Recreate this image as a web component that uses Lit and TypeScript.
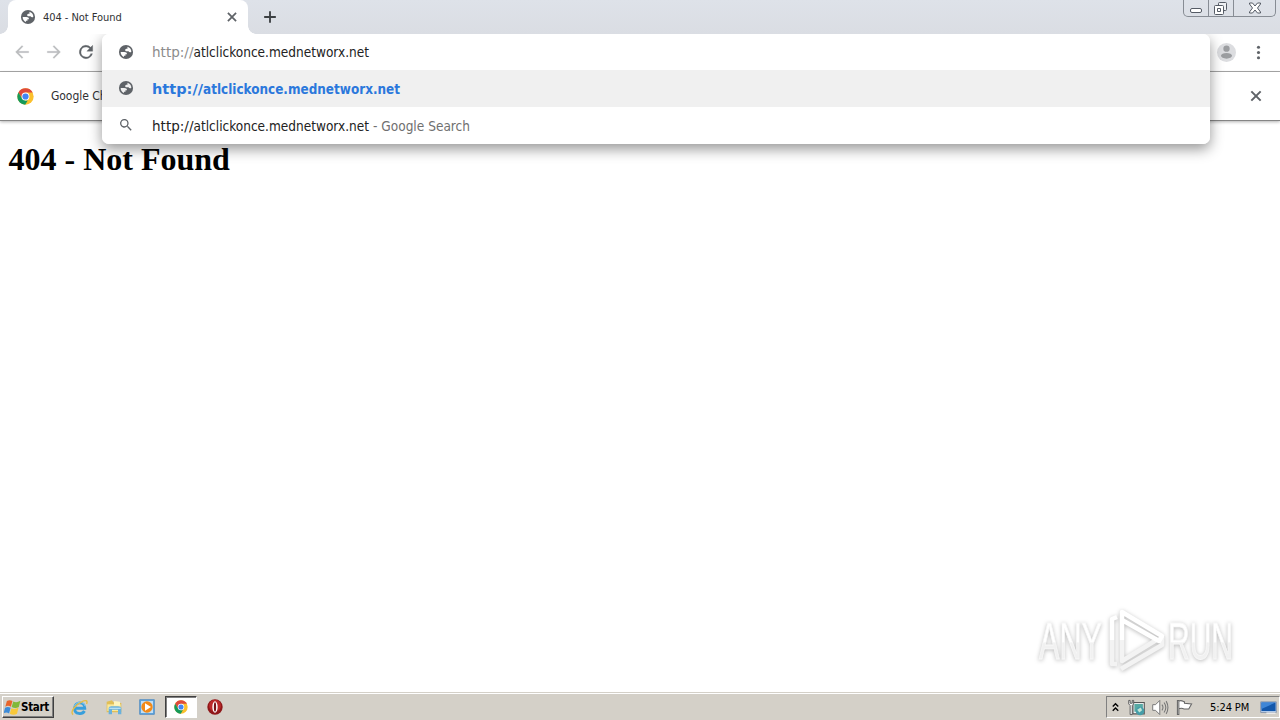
import { LitElement, html, svg, css } from "lit";
import { property, customElement } from "lit/decorators.js";

const icons: Record<string, any> = {
    globe: svg`<circle cx="12" cy="12" r="10.600" fill="#5f6368"/><path fill="var(--hole, #fff)" d="M4 12h5.500c2.600 0 4 1 4 3.200h-2.300v2.300H9v2C5.800 18.300 4 15.500 4 12zM14.200 4.300c3.300.9 5.800 4.100 5.800 7.200-1.200 1.400-3.200 1.200-4.200-.7h-3.500c-2 0-2-3.800 0-3.800h1.900z"/>`,
    close: svg`<path stroke="#5f6368" stroke-width="3" fill="none" d="M5 5l14 14M19 5L5 19"/>`,
    plus: svg`<path stroke="#3c4043" stroke-width="3.2" fill="none" d="M12 2v20M2 12h20"/>`,
    back: svg`<path fill="#babcbe" stroke="#babcbe" stroke-width=".3" d="M21 11H7.200l6.200-6.200L12 3.300 3.300 12l8.700 8.700 1.400-1.500L7.200 13H21z"/>`,
    forward: svg`<path fill="#babcbe" stroke="#babcbe" stroke-width=".3" d="M12 3.300l-1.400 1.500 6.200 6.200H3v2h13.800l-6.200 6.200 1.400 1.500 8.700-8.700z"/>`,
    reload: svg`<path fill="#5f6368" stroke="#5f6368" stroke-width=".4" d="M17.65 6.35A8 8 0 1 0 19.73 14h-2.08A6 6 0 1 1 12 6c1.66 0 3.14.69 4.22 1.78L13 11h7V4z"/>`,
    search: svg`<path fill="#5f6368" d="M15.5 14h-.79l-.28-.27A6.5 6.5 0 1 0 13.73 14.43l.27.28v.79l5 5 1.5-1.5zm-6 0a4.5 4.5 0 1 1 0-9 4.5 4.5 0 0 1 0 9z"/>`,
    user: svg`<circle cx="12" cy="12" r="12" fill="#dcdde0"/><circle cx="12" cy="7.2" r="4" fill="#9b9da0"/><ellipse cx="12" cy="16.2" rx="7" ry="3.6" fill="#9b9da0"/>`,
    dots: svg`<g fill="#5f6368"><circle cx="12" cy="4.5" r="2.2"/><circle cx="12" cy="12" r="2.2"/><circle cx="12" cy="19.5" r="2.2"/></g>`,
    chrome: svg`<circle cx="12" cy="12" r="11.5" fill="#fbc02d"/><path fill="#df4a3c" d="M2 6.3A11.5 11.5 0 0 1 22.2 6.5H12L7.2 14.8z"/><path fill="#159a5a" d="M2 6.3l5.2 8.5 4.8 2.7h3.2L11.5 23.5A11.5 11.5 0 0 1 2 6.3z"/><circle cx="12" cy="12" r="5.6" fill="#fff"/><circle cx="12" cy="12" r="4.4" fill="#4285f4"/>`,
    flag: svg`<g transform="translate(-1.5 -1.5) scale(1.12)"><path fill="#e8642a" d="M5 4c3-2 5-1 7 0l-2 7c-2-1-4-2-7 0z"/><path fill="#80b83a" d="M13 4.500c3 1.500 6 1 9-1l-2 8c-3 1.800-6 1.500-9 0z"/><path fill="#3c8bd8" d="M2.700 12.500c3-2 5-1 7 0l-2 7c-2-1-4-2-7 0z"/><path fill="#f8c83a" d="M10.700 13c3 1.500 6 1 9-1l-2 8c-3 1.800-6 1.500-9 0z"/></g>`,
    ie: svg`<path fill="none" stroke="#389fdc" stroke-width="4" d="M5 13h14.500c0-10-14.500-10-14.500 0 0 9 11 9.500 14 4"/><path fill="none" stroke="#95d5f5" stroke-width="1.200" d="M5 10c2-7 13-7 15 0"/><path fill="none" stroke="#e5bd48" stroke-width="2" d="M3 22c-5-3 3-14 12-18 6-3 9-2 7 3"/>`,
    folder: svg`<path fill="#e1bf56" d="M1 4l8-2 2 3 12 1v14H1z"/><path fill="#fbe99c" d="M2 8h20v10H2z"/><path fill="#fff5bd" d="M12 3l9 1v6h-9z"/><path fill="#69b1dd" d="M4 14c0-2 2-3 4-3h10c3 0 5 1 5 3v9h-5v-7H9v7H4z"/><path fill="#b8e1f3" d="M5 13h17v2H5z"/>`,
    player: svg`<path fill="#62a8df" stroke="#397dbc" d="M1 1h22v22H1z"/><path fill="#c1def5" d="M3 3h18v18H3z"/><circle cx="12" cy="12" r="8.500" fill="#f28a18"/><path fill="#fff" d="M9 6.500v11l9-5.500z"/>`,
    opera: svg`<circle cx="12" cy="12" r="11.500" fill="#8f1719"/><circle cx="12" cy="10" r="9" fill="#bc292a"/><ellipse cx="12" cy="12" rx="4" ry="8.500" fill="#fff"/><ellipse cx="12" cy="12" rx="1.700" ry="7" fill="#761317"/>`,
    chevrons: svg`<path fill="none" stroke="#000" stroke-width="3" d="M6 10l6-6 6 6M6 19l6-6 6 6"/>`,
    network: svg`<path fill="#eee" stroke="#555" stroke-width="1.500" d="M7 5h16v16H7z"/><path fill="#57a9a3" d="M9 7h12v11H9z"/><circle cx="17" cy="17" r="6" fill="#469da8"/><path fill="#c2e5d5" d="M13 15l5-3 2 4-4 3z"/><path fill="#fff" stroke="#555" stroke-width="1.300" d="M1 2v5l2 2v13h3V9l2-2V2H6v4H3V2z"/>`,
    volume: svg`<path fill="#fff" stroke="#777" stroke-width="1.400" d="M1 8h4l6-6v20l-6-6H1z"/><path fill="none" stroke="#777" stroke-width="1.500" d="M14 8q3 4 0 8M17 5q5 7 0 14M20 3q5 9 0 18"/>`,
    pennant: svg`<path fill="#fff" stroke="#666" stroke-width="1.500" d="M2 2h2v20H2zM4 3c4-2 5 0 8 1v2l10 1-4 7h-7c-3-2-4-1-7 0z"/>`,
    desktop: svg`<path fill="#bdd3ef" stroke="#6d7f9c" d="M1 4h22v15H1z"/><path fill="#1357ab" d="M2 5h20v12H2z"/><path fill="#3f86d7" d="M2 5h20L2 14z"/><path fill="#eee" d="M9 19h13v2H9z"/>`,
};

@customElement("ui-icon")
export class UiIcon extends LitElement {
    @property() name = "";
    @property({ type: Number }) size = 16;

    static styles = css`
        :host {
            display: block;
            flex: none;
            line-height: 0;
        }
    `;

    render() {
        return html`<svg width=${this.size} height=${this.size} viewBox="0 0 24 24">${icons[this.name]}</svg>`;
    }
}

@customElement("app-root")
export class AppRoot extends LitElement {
    static styles = css`
        :host {
            display: flex;
            flex-direction: column;
            position: relative;
            width: 1280px;
            height: 720px;
            overflow: hidden;
            background: #fff;
            color: #303134;
            font-family: "DejaVu Sans Condensed", "DejaVu Sans", sans-serif;
            font-stretch: condensed;
        }

        * {
            box-sizing: border-box;
        }

        .tabs {
            display: flex;
            height: 34px;
            background: linear-gradient(#dee2e9, #dadde3);
            padding-left: 8px;
        }

        .tab {
            display: flex;
            align-items: center;
            position: relative;
            width: 240px;
            height: 34px;
            padding: 0 9px 0 12px;
            background: #fff;
            border-radius: 8px 8px 0 0;
            font-size: 11px;
        }

        .tab::before,
        .tab::after {
            content: "";
            position: absolute;
            bottom: 0;
            width: 8px;
            height: 8px;
        }

        .tab::before {
            left: -8px;
            background: radial-gradient(circle at 0 0, transparent 7.5px, #fff 8px);
        }

        .tab::after {
            right: -8px;
            background: radial-gradient(circle at 100% 0, transparent 7.5px, #fff 8px);
        }

        .tab span {
            flex: 1;
            margin-left: 7px;
            letter-spacing: -0.05px;
        }

        .tab ui-icon,
        .add {
            margin-bottom: 1px;
        }

        .add {
            display: flex;
            align-items: center;
            margin-left: 15px;
        }

        .window {
            display: flex;
            width: 93px;
            height: 17px;
            margin: 0 4px 0 auto;
            border: 1px solid #878c94;
            border-top: 0;
            border-radius: 0 0 5px 5px;
        }

        .window svg {
            display: block;
        }

        .toolbar {
            display: flex;
            align-items: center;
            height: 38px;
            padding: 0 13px;
            border-bottom: 1px solid #aaa;
        }

        .nav {
            display: flex;
            align-items: center;
            gap: 14px;
            margin-bottom: 1px;
        }

        .nav ui-icon:last-child {
            margin-left: -1px;
        }

        .menu {
            display: flex;
            align-items: center;
            gap: 14px;
            margin-left: auto;
        }

        .infobar {
            display: flex;
            align-items: center;
            height: 49px;
            padding: 0 16px 0 17px;
            border-bottom: 1px solid #858585;
            box-shadow: 0 1px 3px rgba(0, 0, 0, 0.3);
            font-size: 12px;
        }

        .infobar span {
            flex: 1;
            margin: 0 0 1px 17px;
            letter-spacing: -0.05px;
        }

        .page {
            flex: 1;
        }

        h1 {
            margin: 20px 8.5px;
            font: bold 32px/37px "Liberation Serif", serif;
            color: #000;
        }

        .omnibox {
            position: absolute;
            left: 102px;
            top: 34px;
            width: 1108px;
            height: 110px;
            overflow: hidden;
            background: #fff;
            border-radius: 7px;
        }

        .shadow {
            position: absolute;
            left: 102px;
            top: 34px;
            width: 1108px;
            height: 110px;
            border-radius: 7px;
            box-shadow: 0 5px 14px rgba(0, 0, 0, 0.42);
            clip-path: inset(0 -20px -24px -20px);
        }

        .row {
            display: flex;
            align-items: center;
            height: 37px;
            padding-left: 16px;
            font-size: 14px;
        }

        .row:first-child {
            height: 36px;
        }

        .row ui-icon {
            margin-bottom: 1px;
        }

        .row svg {
            display: block;
            margin-left: 18px;
        }

        .active {
            --hole: #f0f0f0;
            background: #f0f0f0;
        }

        .watermark {
            position: absolute;
            left: 1020px;
            top: 600px;
            overflow: visible;
            filter: drop-shadow(0 1px 2px rgba(0, 0, 0, 0.27));
        }

        .taskbar {
            display: flex;
            align-items: center;
            height: 28px;
            padding: 2px 0 0 2px;
            background: #d4d0c8;
            box-shadow: inset 0 1px #d4d0c8, inset 0 2px #fff;
        }

        .start {
            display: flex;
            align-items: center;
            width: 52px;
            height: 22px;
            padding-left: 1px;
            border: 1px solid;
            border-color: #fff #404040 #404040 #fff;
            box-shadow: inset -1px -1px #808080;
            color: #000;
            font-size: 11.5px;
            font-weight: bold;
            letter-spacing: -0.3px;
        }

        .apps {
            display: flex;
            align-items: center;
            margin-left: 9px;
        }

        .app {
            display: grid;
            place-items: center;
            width: 33.8px;
            height: 22px;
        }

        .pressed {
            background: #fff;
            border: 1px solid;
            border-color: #404040 #fff #fff #404040;
            box-shadow: inset 1px 1px #808080;
            width: 32px;
            margin: 0 1px;
        }

        .tray {
            display: flex;
            align-items: center;
            width: 174px;
            height: 22px;
            margin-left: auto;
            padding-left: 3px;
            border: 1px solid;
            border-color: #808080 #fff #fff #808080;
            color: #000;
            font-size: 11px;
        }

        .tray ui-icon + ui-icon {
            margin-left: 7px;
        }

        .tray span {
            width: 40px;
            margin: 0 10px 0 17px;
            letter-spacing: -0.1px;
            white-space: nowrap;
        }
    `;

    renderUrl(schemeWidth: number, width: number, scheme: string, color: string, weight = "normal") {
        return svg`
            <g font-weight=${weight}>
                <text x="0" y="17" textLength=${schemeWidth} lengthAdjust="spacingAndGlyphs" fill=${scheme}>http://</text>
                <text x=${schemeWidth} y="17" textLength=${width - schemeWidth} lengthAdjust="spacingAndGlyphs" fill=${color}>atlclickonce.mednetworx.net</text>
            </g>
        `;
    }

    renderSuggestions() {
        return html`
            <div class="shadow"></div>
            <div class="omnibox">
                <div class="row">
                    <ui-icon name="globe"></ui-icon>
                    <svg width="420" height="24">${this.renderUrl(41.5, 217, "#8c8c8c", "#222")}</svg>
                </div>
                <div class="row active">
                    <ui-icon name="globe"></ui-icon>
                    <svg width="420" height="24">${this.renderUrl(51, 248, "#2b78dc", "#2b78dc", "bold")}</svg>
                </div>
                <div class="row">
                    <ui-icon name="search"></ui-icon>
                    <svg width="420" height="24">
                        ${this.renderUrl(41.5, 217, "#222", "#222")}
                        <text x="221" y="17" textLength="97" lengthAdjust="spacingAndGlyphs" fill="#707070">- Google Search</text>
                    </svg>
                </div>
            </div>
        `;
    }

    renderWatermark() {
        return html`
            <svg class="watermark" width="240" height="80" viewBox="0 0 240 80" font-family="Liberation Sans" font-size="51">
                <defs>
                    <linearGradient id="fade" x1="0" y1="0" x2="0" y2="1">
                        <stop offset="0.5" stop-color="#fff" />
                        <stop offset="0.53" stop-color="#f1f1f1" />
                    </linearGradient>
                </defs>
                <g stroke="#f8f8f8" stroke-width="0.9">
                    <text x="19" y="59" textLength="63" lengthAdjust="spacingAndGlyphs" fill="url(#fade)">ANY</text>
                    <text x="148" y="59" textLength="65" lengthAdjust="spacingAndGlyphs" fill="url(#fade)">RUN</text>
                </g>
                <g fill="none" stroke-width="4.5" stroke-linejoin="round">
                    <path stroke="#f3f3f3" d="M92 40v24h5M102 40v21l36-22M101 69l41-24v-8" />
                    <path stroke="#fff" d="M92 40V19l5-2M102 40V12l40 24-3 5-37-21" />
                </g>
            </svg>
        `;
    }

    render() {
        return html`
            <div class="tabs">
                <div class="tab">
                    <ui-icon name="globe"></ui-icon>
                    <span>404 - Not Found</span>
                    <ui-icon name="close" size="14"></ui-icon>
                </div>
                <div class="add"><ui-icon name="plus" size="14"></ui-icon></div>
                <div class="window">
                    <svg width="91" height="16" fill="none" stroke="#555b65">
                        <path stroke="#878c94" d="M24.500 0v16M49.500 0v16" />
                        <rect x="6.500" y="8.500" width="11" height="4" rx="1.500" fill="#fff" />
                        <rect x="34.500" y="2.500" width="8" height="8" rx="1" fill="#eef0f3" />
                        <rect x="30.500" y="5.500" width="9" height="9" rx="1" fill="#fff" />
                        <path d="M33.500 8.500h3v3h-3z" />
                        <path fill="#fff" d="M65.500 3h3l2.500 3 2.500-3h3v1l-3 4 3 4v1h-3L71 10l-2.500 3h-3v-1l3-4-3-4z" />
                    </svg>
                </div>
            </div>
            <div class="toolbar">
                <div class="nav">
                    <ui-icon name="back" size="18"></ui-icon>
                    <ui-icon name="forward" size="18"></ui-icon>
                    <ui-icon name="reload" size="20"></ui-icon>
                </div>
                <div class="menu">
                    <ui-icon name="user" size="19"></ui-icon>
                    <ui-icon name="dots" size="17"></ui-icon>
                </div>
            </div>
            <div class="infobar">
                <ui-icon name="chrome" size="17"></ui-icon>
                <span>Google Ch</span>
                <ui-icon name="close" size="16"></ui-icon>
            </div>
            <div class="page"><h1>404 - Not Found</h1></div>
            <div class="taskbar">
                <div class="start"><ui-icon name="flag" size="17"></ui-icon>Start</div>
                <div class="apps">
                    ${["ie", "folder", "player", "chrome", "opera"].map(
                        (name) => html`<div class="app ${name === "chrome" ? "pressed" : ""}">
                            <ui-icon name=${name} size=${name === "ie" ? 17 : name === "chrome" ? 14 : 16}></ui-icon>
                        </div>`
                    )}
                </div>
                <div class="tray">
                    <ui-icon name="chevrons" size="11"></ui-icon>
                    <ui-icon name="network" size="17"></ui-icon>
                    <ui-icon name="volume" size="17"></ui-icon>
                    <ui-icon name="pennant" size="17"></ui-icon>
                    <span>5:24 PM</span>
                    <ui-icon name="desktop" size="17"></ui-icon>
                </div>
            </div>
            ${this.renderSuggestions()} ${this.renderWatermark()}
        `;
    }
}
